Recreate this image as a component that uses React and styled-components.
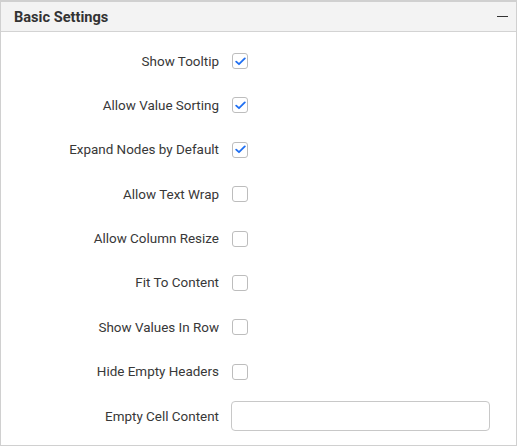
import React, { useState } from "react";
import styled, { createGlobalStyle } from "styled-components";

const Global = createGlobalStyle`
  html, body { margin: 0; padding: 0; background: #fff; }
  body { font-family: Roboto, "Liberation Sans", sans-serif; }
`;

const settings = [
  { label: "Show Tooltip", checked: true },
  { label: "Allow Value Sorting", checked: true },
  { label: "Expand Nodes by Default", checked: true },
  { label: "Allow Text Wrap", checked: false },
  { label: "Allow Column Resize", checked: false },
  { label: "Fit To Content", checked: false },
  { label: "Show Values In Row", checked: false },
  { label: "Hide Empty Headers", checked: false },
];

function App() {
  const [values, setValues] = useState(settings.map((s) => s.checked));

  function toggle(i) {
    setValues(values.map((v, j) => (j === i ? !v : v)));
  }

  return (
    <Panel>
      <Global />
      <Header>
        <Title>Basic Settings</Title>
        <Collapse />
      </Header>
      <Body>
        {settings.map((s, i) => (
          <Row key={s.label}>
            <Label>{s.label}</Label>
            <Check checked={values[i]} onClick={() => toggle(i)}>
              {values[i] && (
                <svg width="11" height="9" viewBox="0 0 11 9">
                  <polyline
                    points="1.2,4.6 4,7.2 9.8,1.4"
                    fill="none"
                    stroke="#1f6ff2"
                    strokeWidth="1.8"
                    strokeLinecap="round"
                    strokeLinejoin="round"
                  />
                </svg>
              )}
            </Check>
          </Row>
        ))}
        <Row>
          <Label>Empty Cell Content</Label>
          <TextBox type="text" />
        </Row>
      </Body>
    </Panel>
  );
}

const Panel = styled.div`
  width: 517px;
  height: 446px;
  box-sizing: border-box;
  border: 1px solid #d0d0d0;
  border-top: 2px solid #d0d0d0;
  display: flex;
  flex-direction: column;
`;

const Header = styled.div`
  height: 29px;
  background: #f3f3f3;
  border-bottom: 1px solid #d3d3d3;
  display: flex;
  align-items: center;
  justify-content: space-between;
  padding: 0 8px 0 13px;
`;

const Title = styled.div`
  font-size: 14.6px;
  font-weight: 700;
  color: #333;
`;

const Collapse = styled.div`
  width: 11px;
  height: 1.5px;
  background: #333;
`;

const Body = styled.div`
  flex: 1;
  padding: 14px 0 0 0;
  display: flex;
  flex-direction: column;
  gap: 14.4px;
`;

const Row = styled.div`
  height: 30px;
  display: grid;
  grid-template-columns: 218px 1fr;
  column-gap: 13px;
  align-items: center;
`;

const Label = styled.div`
  text-align: right;
  font-size: 13.45px;
  color: #383838;
`;

const Check = styled.div`
  width: 14px;
  height: 14px;
  border: 1px solid #bdbdbd;
  border-radius: 3px;
  display: flex;
  align-items: center;
  justify-content: center;
  background: #fff;
  cursor: pointer;
`;

const TextBox = styled.input`
  width: 259px;
  height: 30px;
  box-sizing: border-box;
  margin-left: -1px;
  border: 1px solid #c8c8c8;
  border-radius: 4px;
  outline: none;
  padding: 0 8px;
  font-family: Roboto, sans-serif;
  font-size: 13px;
`;

export default App;
